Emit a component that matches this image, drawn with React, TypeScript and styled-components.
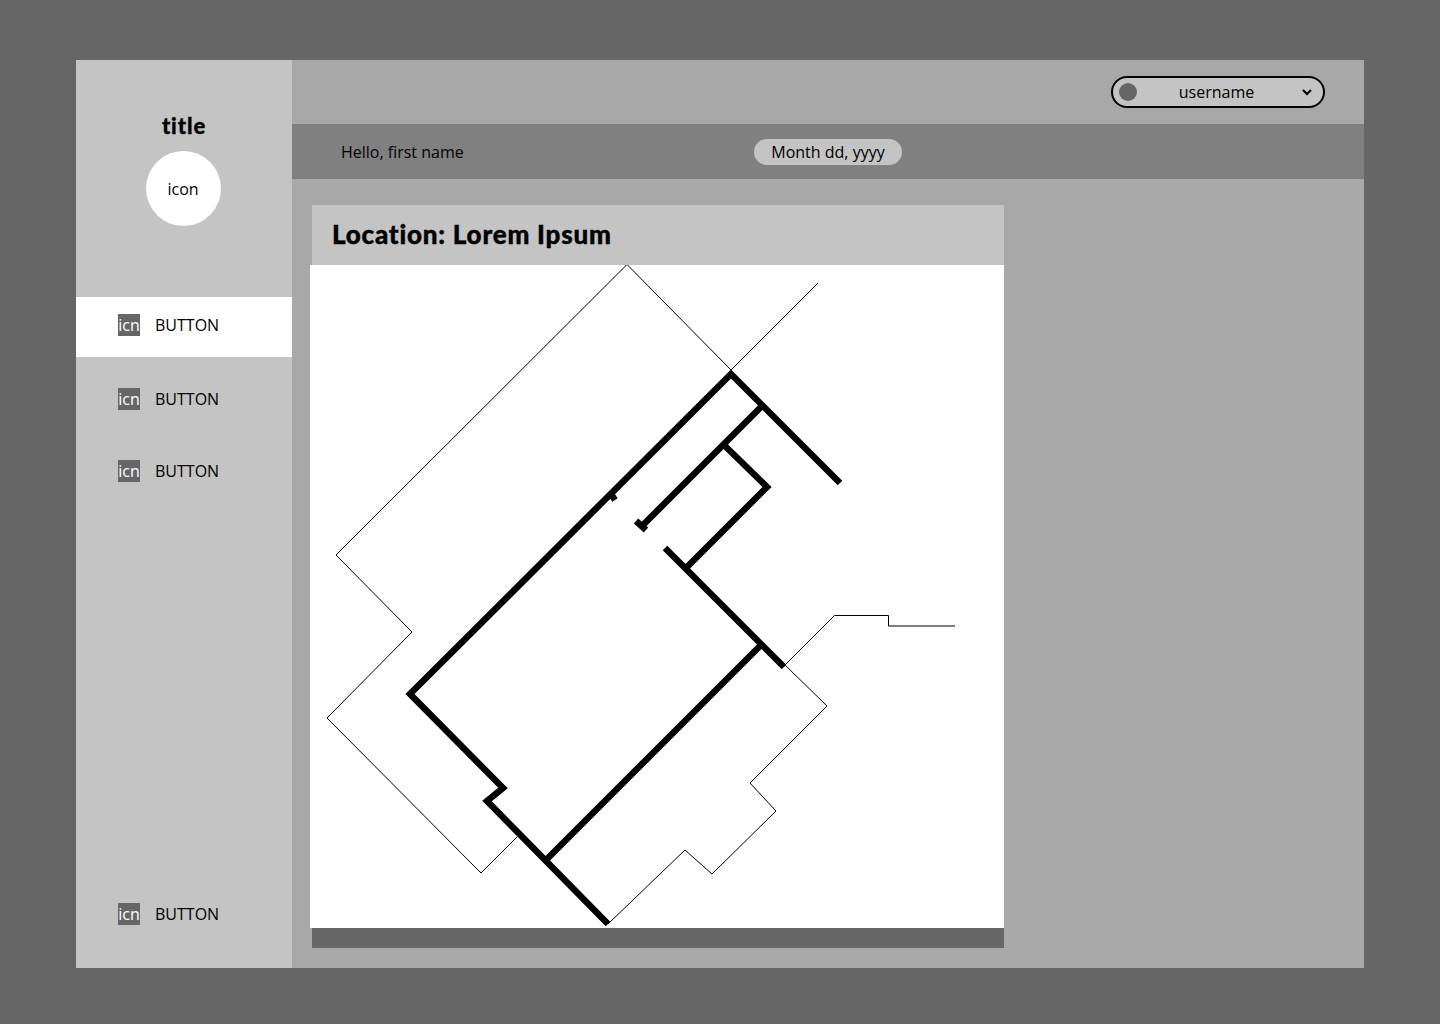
import React from "react";
import styled, { createGlobalStyle } from "styled-components";

const Global = createGlobalStyle`
  html, body { margin: 0; padding: 0; }
  body { font-family: "Open Sans", "Noto Sans", sans-serif; color: #000; }
`;

const Page = styled.div`
  width: 1440px; height: 1024px; box-sizing: border-box;
  padding: 60px 76px 56px; background: #666666;
`;
const Frame = styled.div`
  display: flex; height: 908px; opacity: 0.999;
`;
const Sidebar = styled.aside`
  width: 216px; flex: none; background: #c4c4c4;
  display: flex; flex-direction: column;
`;
const Brand = styled.div`
  height: 237px; flex: none; padding-top: 52px; box-sizing: border-box;
  display: flex; flex-direction: column; align-items: center;
`;
const Title = styled.h1`
  margin: 0 0 11px; font: 900 22px/28px Lato, "Open Sans", sans-serif;
  letter-spacing: 0.9px; font-variant-ligatures: none; -webkit-text-stroke: 0.3px #000;
`;
const LogoCircle = styled.div`
  width: 75px; height: 75px; border-radius: 50%; background: #fff; padding-right: 1px; box-sizing: border-box;
  display: flex; align-items: center; justify-content: center; font-size: 16px; margin-left: -1px;
`;
const NavItem = styled.div<{ $active?: boolean; $height: number; $lift?: number; $push?: boolean }>`
  display: flex; align-items: center; gap: 15px; padding-left: 42px; box-sizing: border-box;
  height: ${(p) => p.$height}px; flex: none; padding-bottom: ${(p) => p.$lift ?? 0}px;
  background: ${(p) => (p.$active ? "#fff" : "transparent")};
  margin-top: ${(p) => (p.$push ? "auto" : "0")};
  font-size: 16px;
`;
const Icn = styled.span`
  width: 22px; height: 22px; background: #666666; color: #fff; font-size: 16px; line-height: 22px;
  text-align: center; overflow: hidden; flex: none;
`;
const Main = styled.main`
  flex: 1; background: #a8a8a8; display: flex; flex-direction: column;
`;
const TopBar = styled.header`
  height: 64px; flex: none; display: flex; align-items: center; justify-content: flex-end; padding-right: 39px;
`;
const UserSelect = styled.div`
  width: 214px; height: 32px; box-sizing: border-box; border: 2px solid #000; border-radius: 16px; background: #c4c4c4;
  display: flex; align-items: center; padding: 0 11px 0 6px; font-size: 16px;
`;
const Avatar = styled.span`
  width: 18px; height: 18px; border-radius: 50%; background: #666666; flex: none;
`;
const UserName = styled.span`
  flex: 1; text-align: center; margin-right: 6px;
`;
const GreetBar = styled.div`
  height: 55px; flex: none; background: #808080; display: flex; align-items: center; padding-left: 49px; font-size: 16px;
`;
const Greeting = styled.span`
  width: 413px; flex: none;
`;
const DatePill = styled.span`
  width: 148px; height: 26px; border-radius: 13px; background: #c4c4c4; font-size: 16px; line-height: 26px; text-align: center;
`;
const Card = styled.section`
  margin: 26px 0 20px 20px; width: 692px; flex: 1; display: flex; flex-direction: column;
`;
const CardHeader = styled.div`
  height: 60px; flex: none; background: #c4c4c4; padding: 0 0 2px 20px; box-sizing: border-box; display: flex; align-items: center;
`;
const CardTitle = styled.h2`
  margin: 0; font: 900 26px/34px Lato, "Open Sans", sans-serif;
  letter-spacing: 0.78px; font-variant-ligatures: none; -webkit-text-stroke: 0.4px #000;
`;
const MapArea = styled.div`
  flex: 1; background: #fff; margin-left: -2px; min-height: 0;
`;
const MapSvg = styled.svg`
  display: block; width: 694px; height: 663px;
`;
const CardFooter = styled.div`
  height: 20px; flex: none; background: #666666;
`;

const Thin = styled.polyline`
  fill: none; stroke: #000; stroke-width: 1;
`;
const Thick = styled.polyline`
  fill: none; stroke: #000; stroke-width: 6.5; stroke-linejoin: miter;
`;

const thin = [
  "818,283 731,370 627,264.5 336,555 412,632 327,718 481,873 517,837",
  "785,665 827,706 750,783 776,811 712,874 685,850 608,924",
  "785,665 834.5,615.5 888.5,615.5 888.5,626 955,626",
];
const thick = [
  "840,483 731,374 410,694 503,788 487,801 608,924",
  "762,406 642,526",
  "636,521 646,530",
  "724,445 767,487 686,568",
  "665,548 784,667",
  "761,645 546,860",
  "611,494 615,500",
];

export default function App() {
  return (
    <>
      <Global />
      <Page>
        <Frame>
          <Sidebar>
            <Brand>
              <Title>title</Title>
              <LogoCircle>icon</LogoCircle>
            </Brand>
            <NavItem $active $height={60} $lift={4}><Icn>icn</Icn>BUTTON</NavItem>
            <NavItem $height={84}><Icn>icn</Icn>BUTTON</NavItem>
            <NavItem $height={60}><Icn>icn</Icn>BUTTON</NavItem>
            <NavItem $push $height={108}><Icn>icn</Icn>BUTTON</NavItem>
          </Sidebar>
          <Main>
            <TopBar>
              <UserSelect>
                <Avatar />
                <UserName>username</UserName>
                <svg width="10" height="7" viewBox="0 0 10 7" fill="none" stroke="#000" strokeWidth="2">
                  <path d="M1 1l4 4 4-4" />
                </svg>
              </UserSelect>
            </TopBar>
            <GreetBar>
              <Greeting>Hello, first name</Greeting>
              <DatePill>Month dd, yyyy</DatePill>
            </GreetBar>
            <Card>
              <CardHeader><CardTitle>Location: Lorem Ipsum</CardTitle></CardHeader>
              <MapArea>
                <MapSvg viewBox="310 265 694 663">
                  {thin.map((p) => <Thin key={p} points={p} />)}
                  {thick.map((p) => <Thick key={p} points={p} />)}
                </MapSvg>
              </MapArea>
              <CardFooter />
            </Card>
          </Main>
        </Frame>
      </Page>
    </>
  );
}
